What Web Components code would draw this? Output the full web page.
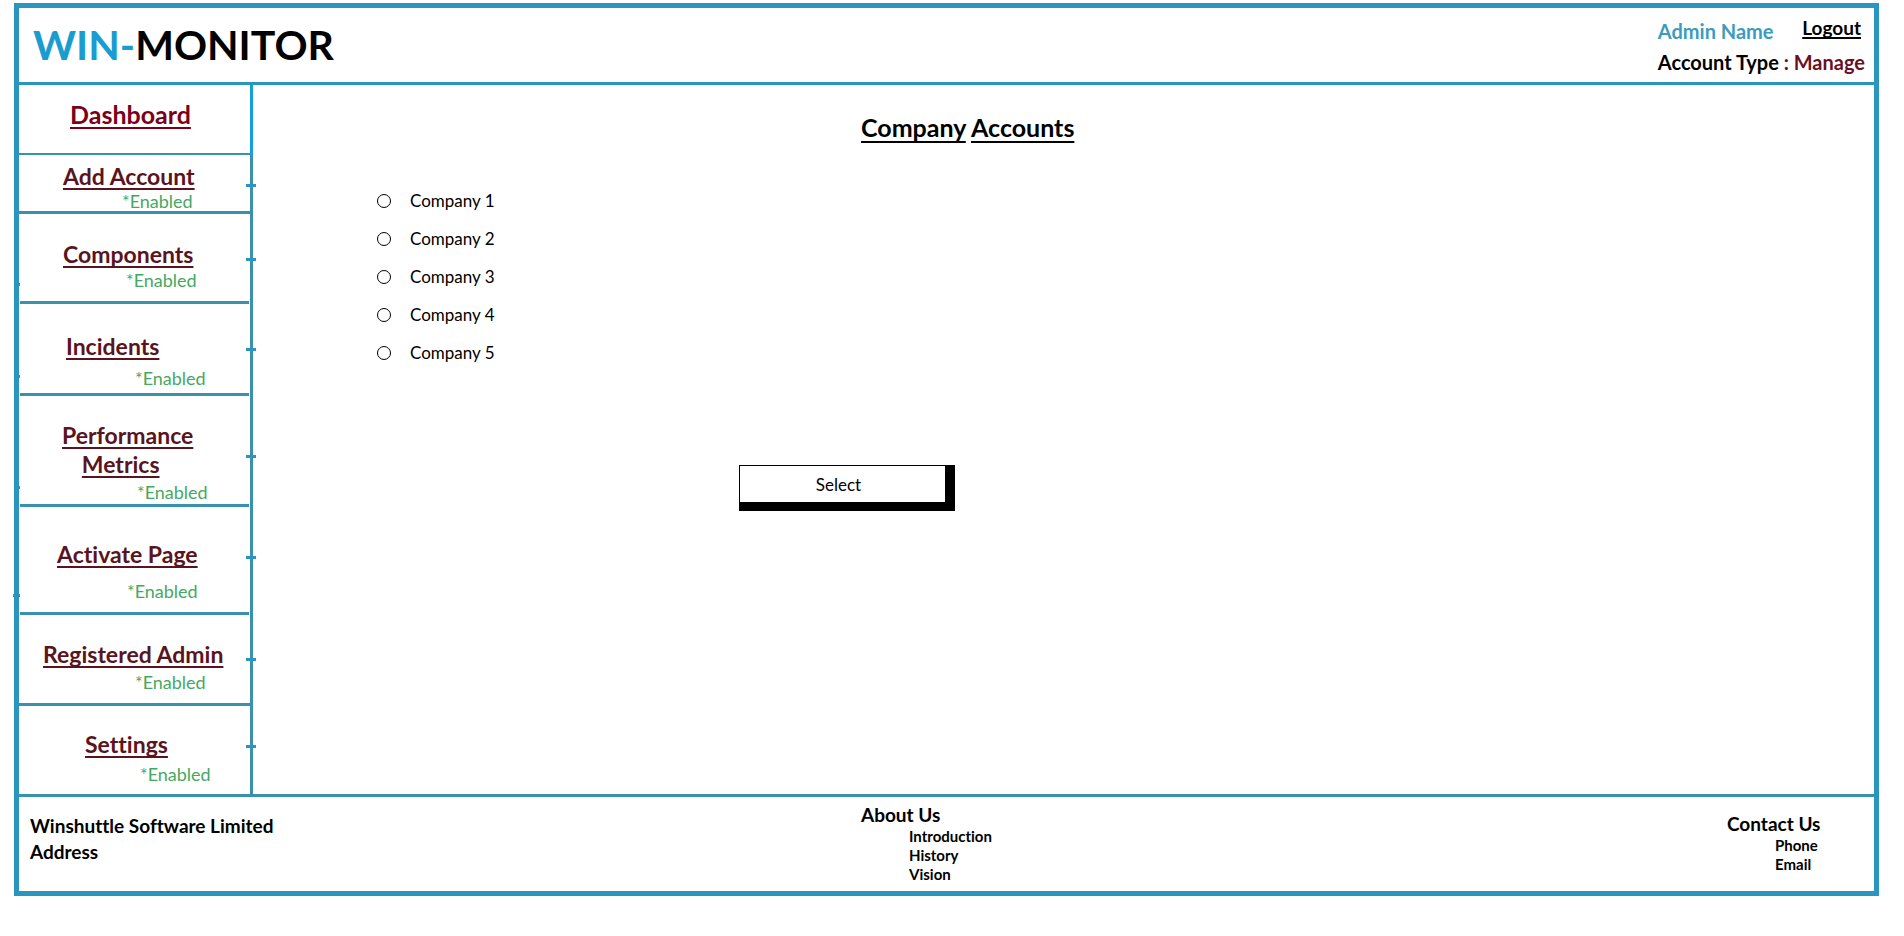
<!DOCTYPE html>
<html lang="en">
<head>
<meta charset="utf-8">
<title>WIN-MONITOR</title>
<style>
  body { margin: 0; background: #fff; color: #000; font-family: Lato, "Open Sans", sans-serif; font-variant-ligatures: none; }
</style>
</head>
<body>
<win-monitor></win-monitor>

<template id="win-monitor">
  <style>
    :host { display: block; margin: 3px 25px 0 14px; border: 5px solid #2a96c0; }
    .body { display: flex; border-top: 3px solid #2a96c0; border-bottom: 3px solid #3a91ae; }
    main-nav { flex: 0 0 234px; }
    company-picker { flex: 1; }
  </style>
  <site-header></site-header>
  <div class="body">
    <main-nav></main-nav>
    <company-picker></company-picker>
  </div>
  <site-footer></site-footer>
</template>

<template id="site-header">
  <style>
    :host { display: flex; justify-content: space-between; min-height: 74px; }
    h1 { margin: 0; padding: 11px 0 0 14px; font-size: 41px; line-height: 52px; font-weight: 700; }
    h1 span { color: #1a9cd0; }
    .account { padding: 8px 9px 0 0; font-size: 20px; font-weight: 700; line-height: 24px; }
    .row { display: flex; justify-content: space-between; align-items: flex-start; padding-right: 4px; }
    .name { color: #3a9cc0; padding-top: 3px; }
    a { color: #000; font-size: 19px; text-decoration-thickness: 2px; text-underline-offset: 2px; text-decoration-skip-ink: none; }
    .type { margin: 0; padding-top: 7px; }
    .type span { color: #6a1024; }
  </style>
  <h1><span>WIN-</span>MONITOR</h1>
  <div class="account">
    <div class="row"><span class="name">Admin Name</span><a href="#logout">Logout</a></div>
    <p class="type">Account Type <span>: Manage</span></p>
  </div>
</template>

<template id="main-nav">
  <style>
    :host { display: block; }
    nav { display: flex; flex-direction: column; }
    nav-item { --h: 88px; --top: 25px; --gap: 3px; --tick: 44px; }
    .home { --h: 68px; --top: 15px; --link: 51px; --size: 25px; --ink: #7c0018; --line: 2px; --edge: #14a0dc; --notch: 0px; }
    .add { --h: 56px; --top: 7px; --gap: 0px; --link: 44px; --state: 103px; --tick: 29px; }
    .components { --h: 87px; --top: 26px; --link: 44px; --gap: 1px; --state: 107px; --inset: 1px; --left: 69px; --nub: 1px; }
    .incidents { --h: 89px; --top: 28px; --gap: 7px; --link: 47px; --state: 116px; --inset: 1px; --left: 71px; --nub: 1px; }
    .metrics { --h: 108px; --link: 43px; --state: 118px; --inset: 1px; --tick: 59px; --left: 90px; --nub: 1px; }
    .metrics span { margin-right: 14px; }
    .activate { --h: 105px; --top: 33px; --gap: 12px; --link: 38px; --state: 108px; --inset: 1px; --tick: 49px; --left: 87px; --nub: 7px; --out: -6px; }
    .admin { --link: 24px; --state: 116px; --tick: 43px; }
    .settings { --link: 66px; --top: 24px; --gap: 5px; --state: 121px; --line: 0px; --tick: 39px; }
  </style>
  <nav aria-label="Main">
    <nav-item class="home" href="#dashboard">Dashboard</nav-item>
    <nav-item class="add" href="#add-account" state="*Enabled">Add Account</nav-item>
    <nav-item class="components" href="#components" state="*Enabled">Components</nav-item>
    <nav-item class="incidents" href="#incidents" state="*Enabled">Incidents</nav-item>
    <nav-item class="metrics" href="#metrics" state="*Enabled">Performance<br><span>Metrics</span></nav-item>
    <nav-item class="activate" href="#activate" state="*Enabled">Activate Page</nav-item>
    <nav-item class="admin" href="#admin" state="*Enabled">Registered Admin</nav-item>
    <nav-item class="settings" href="#settings" state="*Enabled">Settings</nav-item>
  </nav>
</template>

<template id="nav-item">
  <style>
    :host { display: block; position: relative; border-right: 3px solid var(--edge, #3a91ae); }
    .cell { min-height: calc(var(--h) - var(--top)); padding-top: var(--top);
      margin: 0 var(--inset, 0); border-bottom: var(--line, 3px) solid #3a91ae; }
    a { display: block; width: fit-content; margin-left: calc(var(--link) - var(--inset, 0px)); text-align: center;
      color: var(--ink, #5a1420); font-size: var(--size, 23px); line-height: 29px; font-weight: 700;
      text-decoration-thickness: 2px; text-underline-offset: 3px; text-decoration-skip-ink: none; }
    .state { display: block; margin: var(--gap) 0 0 calc(var(--state, 0px) - var(--inset, 0px));
      color: #45a862; font-size: 18px; line-height: 20px; }
    .notch { position: absolute; right: -6px; top: var(--tick); width: var(--notch, 10px); height: 3px; background: #2a96c0; }
    .nub { position: absolute; left: var(--out, 0); top: var(--left, 0); width: var(--nub, 0); height: 3px; background: #2a96c0; }
  </style>
  <div class="cell"><a><slot></slot></a><span class="state"></span></div>
  <span class="notch"></span><span class="nub"></span>
</template>

<template id="company-picker">
  <style>
    :host { display: block; }
    h2 { margin: 0; padding: 27px 0 0 608px; font-size: 25px; line-height: 30px; font-weight: 700; }
    h2 span { text-decoration: underline 2px; text-underline-offset: 4px; text-decoration-skip-ink: none; }
    fieldset { margin: 47px 0 0 124px; padding: 0; border: 0; display: grid; gap: 14px; justify-items: start; }
    label { display: flex; align-items: center; gap: 19px; font-size: 17px; line-height: 24px; }
    input { appearance: none; box-sizing: border-box; width: 14px; height: 14px; margin: 0; border: 1px solid #000; border-radius: 50%; background: #fff; }
    input:checked { background: #000; box-shadow: inset 0 0 0 3px #fff; }
    button { display: block; margin: 100px 0 0 486px; width: 216px; height: 46px; padding: 1px 8px 0 0; background: #fff; color: #000;
      border: solid #000; border-width: 1px 10px 9px 1px; border-radius: 0; font: 17px/24px Lato, "Open Sans", sans-serif; }
  </style>
  <form>
    <h2><span>Company</span> <span>Accounts</span></h2>
    <fieldset aria-label="Company Accounts">
      <label><input type="radio" name="company" value="1">Company 1</label>
      <label><input type="radio" name="company" value="2">Company 2</label>
      <label><input type="radio" name="company" value="3">Company 3</label>
      <label><input type="radio" name="company" value="4">Company 4</label>
      <label><input type="radio" name="company" value="5">Company 5</label>
    </fieldset>
    <button type="button">Select</button>
  </form>
</template>

<template id="site-footer">
  <style>
    :host { display: grid; grid-template-columns: 842fr 866fr 147fr; min-height: 94px; font-weight: 700; font-size: 19px; line-height: 24px; }
    address { font-style: normal; padding: 16px 0 0 11px; line-height: 26px; }
    .about { padding-top: 6px; }
    .contact { padding-top: 15px; }
    h3 { margin: 0; font-size: 19px; line-height: 24px; }
    ul { margin: 0; padding: 0 0 0 48px; list-style: none; font-size: 15px; line-height: 19px; }
    a { color: inherit; text-decoration: none; }
  </style>
  <address>Winshuttle Software Limited<br>Address</address>
  <section class="about">
    <h3>About Us</h3>
    <ul><li><a href="#introduction">Introduction</a></li><li><a href="#history">History</a></li><li><a href="#vision">Vision</a></li></ul>
  </section>
  <section class="contact">
    <h3>Contact Us</h3>
    <ul><li><a href="#phone">Phone</a></li><li><a href="#email">Email</a></li></ul>
  </section>
</template>

<script>
  class Templated extends HTMLElement {
    constructor() {
      super();
      const template = document.getElementById(this.localName);
      this.attachShadow({ mode: "open" }).append(template.content.cloneNode(true));
    }
  }
  class NavItem extends Templated {
    connectedCallback() {
      this.shadowRoot.querySelector("a").href = this.getAttribute("href");
      const state = this.shadowRoot.querySelector(".state");
      if (this.hasAttribute("state")) state.textContent = this.getAttribute("state");
      else state.remove();
    }
  }
  customElements.define("nav-item", NavItem);
  for (const name of ["main-nav", "site-header", "company-picker", "site-footer", "win-monitor"]) {
    customElements.define(name, class extends Templated {});
  }
</script>
</body>
</html>
